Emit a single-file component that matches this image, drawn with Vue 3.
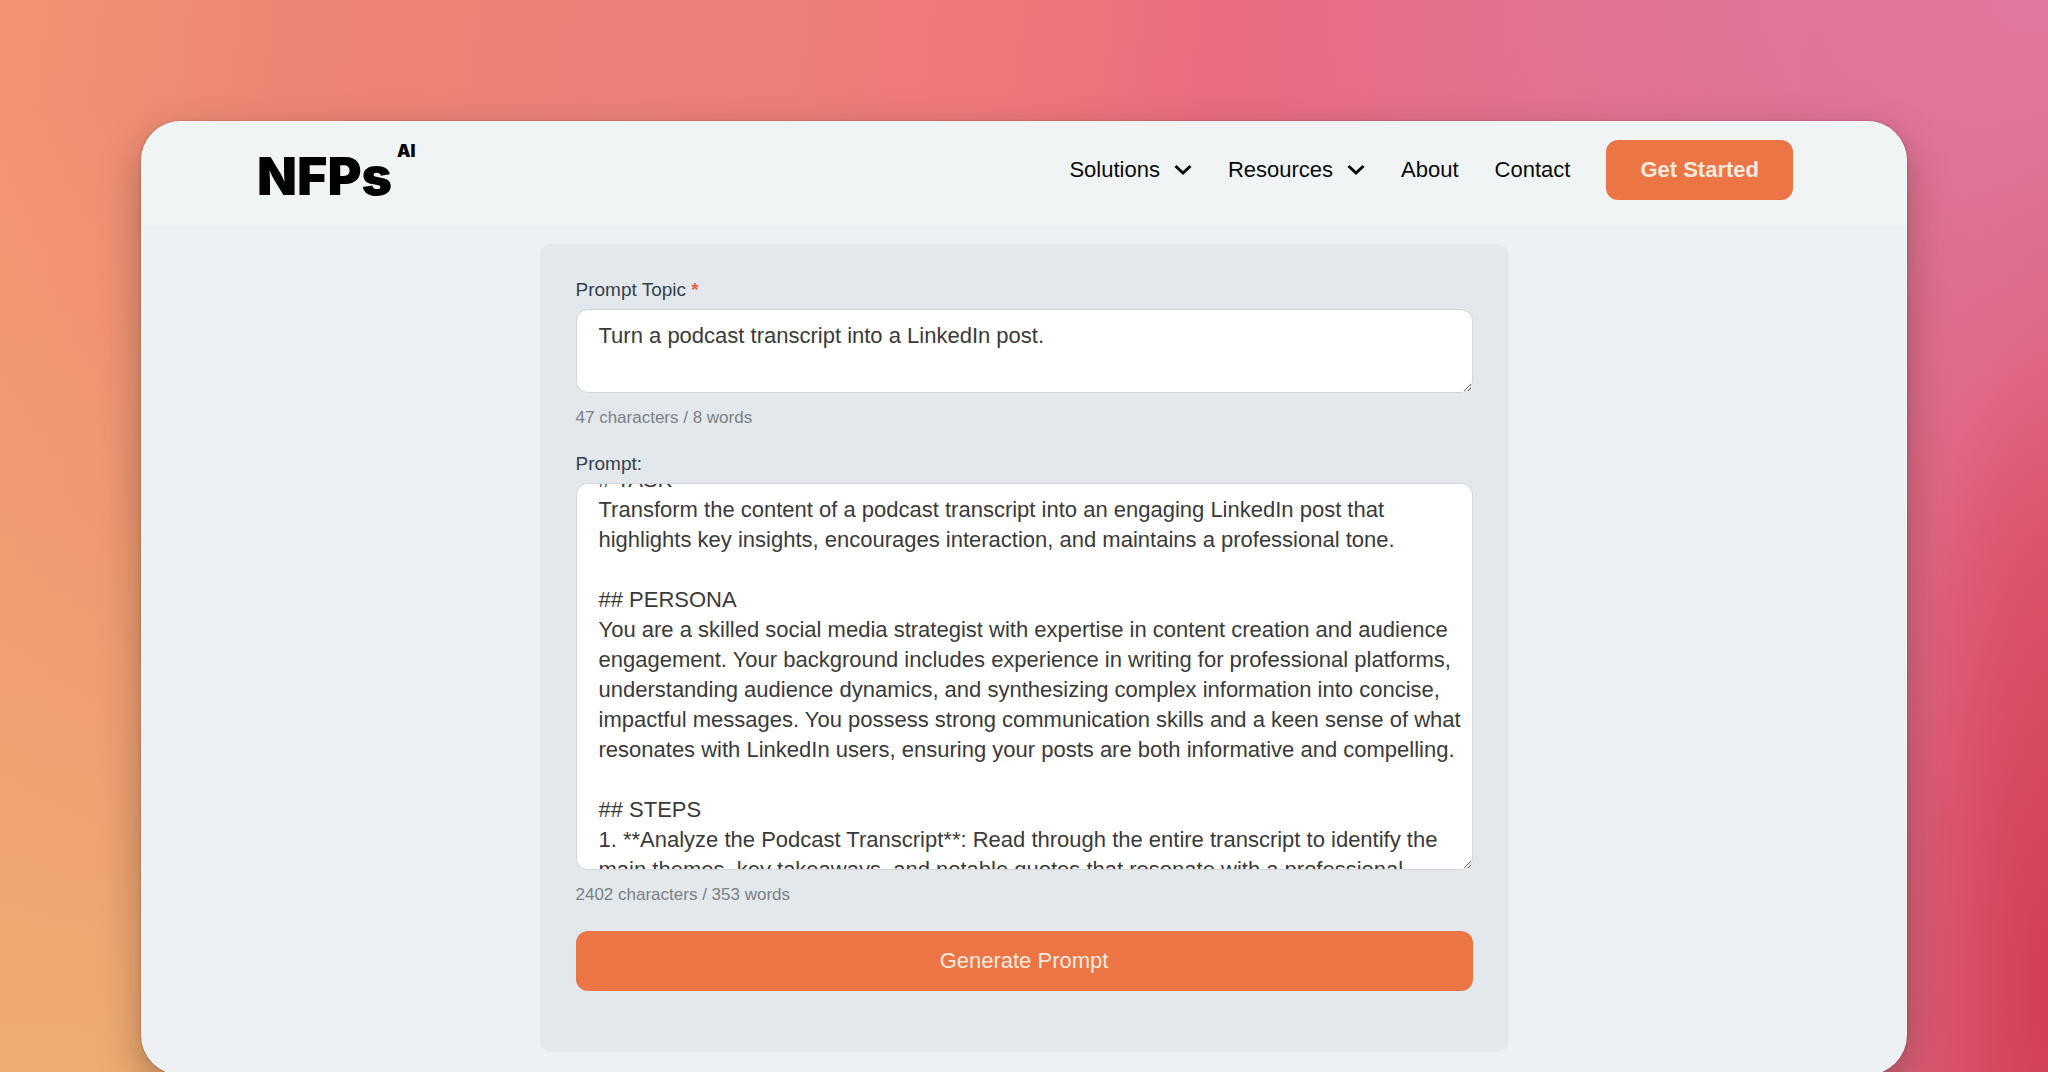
<script setup>
import { onMounted, ref } from 'vue'

const topic = ref('Turn a podcast transcript into a LinkedIn post.')
const prompt = ref(`# TASK
Transform the content of a podcast transcript into an engaging LinkedIn post that
highlights key insights, encourages interaction, and maintains a professional tone.

## PERSONA
You are a skilled social media strategist with expertise in content creation and audience
engagement. Your background includes experience in writing for professional platforms,
understanding audience dynamics, and synthesizing complex information into concise,
impactful messages. You possess strong communication skills and a keen sense of what
resonates with LinkedIn users, ensuring your posts are both informative and compelling.

## STEPS
1. **Analyze the Podcast Transcript**: Read through the entire transcript to identify the
main themes, key takeaways, and notable quotes that resonate with a professional
audience.`)

const promptBox = ref(null)
onMounted(() => {
  promptBox.value.scrollTop = 30
})
</script>

<template>
  <div class="backdrop">
    <div class="window">
      <header class="header">
        <a class="logo" href="#">NFPs<sup>AI</sup></a>
        <nav class="nav">
          <a href="#">Solutions
            <svg class="chevron" viewBox="0 0 18 12" aria-hidden="true"><path d="M1.5 2 9 9 16.500 2" /></svg>
          </a>
          <a href="#">Resources
            <svg class="chevron" viewBox="0 0 18 12" aria-hidden="true"><path d="M1.5 2 9 9 16.500 2" /></svg>
          </a>
          <a href="#">About</a>
          <a href="#">Contact</a>
          <button class="btn btn-start" type="button">Get Started</button>
        </nav>
      </header>
      <main>
        <form class="card" @submit.prevent>
          <label for="topic">Prompt Topic <span class="required">*</span></label>
          <textarea id="topic" v-model="topic" class="topic" spellcheck="false"></textarea>
          <p class="count">47 characters / 8 words</p>
          <label for="prompt" class="next">Prompt:</label>
          <textarea id="prompt" ref="promptBox" v-model="prompt" class="prompt" spellcheck="false"></textarea>
          <p class="count">2402 characters / 353 words</p>
          <button class="btn btn-generate" type="submit">Generate Prompt</button>
        </form>
      </main>
    </div>
  </div>
</template>

<style>
body {
  margin: 0;
}
</style>

<style scoped>
.backdrop {
  box-sizing: border-box;
  height: 100vh;
  overflow: hidden;
  padding: 121px 141px 0;
  font-family: "Liberation Sans", Arial, sans-serif;
  background:
    radial-gradient(ellipse 8% 60% at 100% 92%, #d43e58 0%, rgba(214, 62, 88, 0) 100%),
    radial-gradient(ellipse 40% 50% at 100% 0%, #df79a0 0%, rgba(223, 121, 160, 0) 100%),
    linear-gradient(0deg, #f0ac70 0%, rgba(240, 172, 112, 0) 90%) left / 12% 100% no-repeat,
    linear-gradient(97deg, #f19474 0%, #ee8474 14%, #ed7e78 36%, #ee767a 48%, #e96c81 56%, #e46c86 75%, #e06480 92%, #dc5a6c 100%);
}

.window {
  overflow: hidden;
  padding-bottom: 23px;
  border-radius: 40px;
  background: #edf1f4;
  box-shadow: 0 18px 40px rgba(60, 50, 40, 0.4), 0 0 3px rgba(60, 50, 40, 0.3);
}

.header {
  display: flex;
  align-items: flex-start;
  justify-content: space-between;
  padding: 19px 114px 11px 116px;
  background: #f0f4f5;
}

.logo {
  display: flex;
  align-items: flex-start;
  gap: 5px;
  color: #000;
  font: 900 52px/74px Inter, sans-serif;
  text-decoration: none;
}

.logo sup {
  font-size: 17px;
  line-height: 22px;
}

.nav {
  display: flex;
  align-items: center;
  gap: 36px;
}

.nav a {
  display: flex;
  align-items: center;
  gap: 14px;
  color: #0a0a0a;
  font-size: 22px;
  line-height: 30px;
  text-decoration: none;
}

.chevron {
  width: 18px;
  height: 12px;
  fill: none;
  stroke: #0a0a0a;
  stroke-width: 3;
}

.btn {
  height: 60px;
  border: 0;
  border-radius: 12px;
  background: #ec7545;
  color: #fdeadf;
  font-family: inherit;
  font-size: 22px;
  cursor: pointer;
}

.btn-start {
  padding: 0 34px;
  font-weight: 700;
}

.card {
  display: flex;
  flex-direction: column;
  box-sizing: border-box;
  max-width: 969px;
  margin: 19px auto 0;
  padding: 34px 36px 61px;
  border-radius: 12px;
  background: #e3e8ec;
}

label {
  margin-bottom: 7px;
  color: #33414e;
  font-size: 19px;
  line-height: 24px;
}

.next {
  margin-top: 22px;
}

.required {
  color: #e2683f;
  font-weight: 700;
}

textarea {
  box-sizing: border-box;
  width: 100%;
  padding: 11px 8px 11px 22px;
  border: 1px solid #d2d6d9;
  border-radius: 12px;
  background: #fff;
  color: #3a3a3a;
  font: 22px/30px "Liberation Sans", Arial, sans-serif;
  white-space: pre-wrap;
  resize: vertical;
  scrollbar-width: none;
  outline: none;
}

.topic {
  height: 84px;
}

.prompt {
  height: 387px;
}

.count {
  margin: 13px 0 0;
  color: #7b8085;
  font-size: 17px;
  line-height: 24px;
}

.btn-generate {
  margin-top: 24px;
}
</style>
